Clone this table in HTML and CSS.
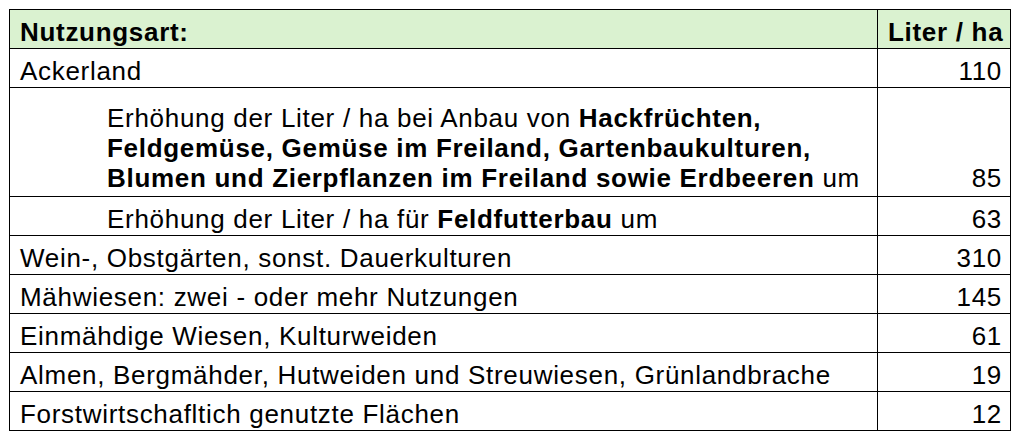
FILE: index.html
```html
<!DOCTYPE html>
<html lang="de">
<head>
<meta charset="utf-8">
<title>Nutzungsart</title>
<link rel="stylesheet" href="styles.css">
</head>
<body>
<table class="tbl">
  <colgroup><col class="c1"><col class="c2"></colgroup>
  <tr class="head"><th class="name">Nutzungsart:</th><th class="val">Liter / ha</th></tr>
  <tr><td class="name">Ackerland</td><td class="val">110</td></tr>
  <tr class="big"><td class="name sub">Erhöhung der Liter / ha bei Anbau von <b>Hackfrüchten,</b><br><b>Feldgemüse, Gemüse im Freiland, Gartenbaukulturen,</b><br><b>Blumen und Zierpflanzen im Freiland sowie Erdbeeren</b> um</td><td class="val">85</td></tr>
  <tr><td class="name sub">Erhöhung der Liter / ha für <b>Feldfutterbau</b> um</td><td class="val">63</td></tr>
  <tr><td class="name">Wein-, Obstgärten, sonst. Dauerkulturen</td><td class="val">310</td></tr>
  <tr><td class="name">Mähwiesen: zwei - oder mehr Nutzungen</td><td class="val">145</td></tr>
  <tr><td class="name">Einmähdige Wiesen, Kulturweiden</td><td class="val">61</td></tr>
  <tr><td class="name">Almen, Bergmähder, Hutweiden und Streuwiesen, Grünlandbrache</td><td class="val">19</td></tr>
  <tr><td class="name">Forstwirtschafltich genutzte Flächen</td><td class="val">12</td></tr>
</table>
</body>
</html>
```
FILE: styles.css
```css
html, body {
  margin: 0;
  padding: 0;
  background: #ffffff;
}
body {
  padding: 9px 0 0 9px;
  font-family: "Liberation Sans", Arial, sans-serif;
  font-size: 26px;
  letter-spacing: 0.7px;
  color: #000;
}
.tbl {
  border-collapse: collapse;
  width: 1001px;
  table-layout: fixed;
}
.c1 { width: 868px; }
.c2 { width: 133px; }
.tbl th, .tbl td {
  border: 1px solid #000;
  height: 39px;
  padding: 0 8px 2px 10px;
  box-sizing: border-box;
  vertical-align: bottom;
  line-height: 28px;
  text-align: left;
  white-space: nowrap;
}
.tbl .val { text-align: right; }
.head th {
  background: #daf2d0;
  font-weight: bold;
}
.tbl .sub { padding-left: 97px; }
.big td {
  height: 109px;
  line-height: 30px;
  padding-bottom: 3px;
}
```
